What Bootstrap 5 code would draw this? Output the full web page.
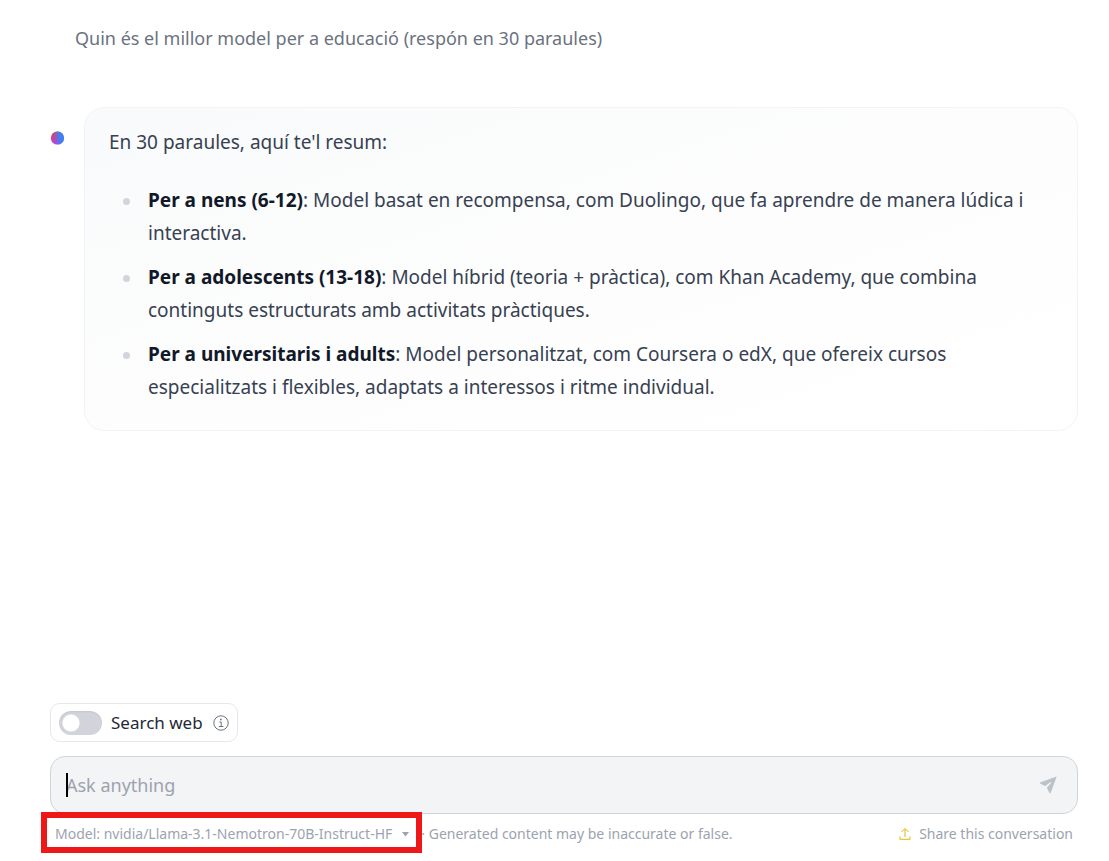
<!DOCTYPE html>
<html lang="ca">
<head>
<meta charset="utf-8">
<meta name="viewport" content="width=device-width, initial-scale=1">
<title>Chat</title>
<link rel="stylesheet" href="https://cdn.jsdelivr.net/npm/bootstrap@5.3.0/dist/css/bootstrap.min.css">
<style>
body { font-family: "Noto Sans", sans-serif; color: #374151; background: #fff; }
.chat { padding: 22px 31px 17px 50px; }
.question { font-size: 18px; line-height: 32px; color: #6b7280; padding-left: 25px; margin-bottom: 53px; }
.avatar { width: 14px; height: 14px; margin-top: 24px; }
.answer { font-size: 19px; line-height: 33px; margin-left: 20px; padding: 18px 24px 26px; border: 1px solid #f3f4f6; border-radius: 20px; background: linear-gradient(to bottom right, #f9fafb, #fefefe 70%, #fff); }
.answer p { margin-bottom: 25px; }
.answer ul { list-style: none; padding-left: 39px; gap: 11px; }
.answer li { position: relative; }
.answer li::before { content: ""; position: absolute; left: -25px; top: 14px; width: 7px; height: 7px; border-radius: 50%; background: #d1d5db; }
.answer strong { color: #111827; }
.search-toggle { height: 39px; padding: 0 8px; border: 1px solid #e5e7eb; border-radius: 10px; color: #1f2937; font-size: 17px; margin-bottom: 14px; }
.search-toggle .form-check-input { width: 43px; height: 24px; margin: 0 9px 0 0; border: 0; background-color: #d1d5db; background-size: 26px; background-image: radial-gradient(circle, #fff 8px, transparent 9px); background-position: -1px center; box-shadow: inset 0 1px 2px #0001; }
.info-btn { margin-left: 10px; color: #6b7280; }
.prompt { height: 58px; border: 1px solid #d1d5db; border-radius: 15px; background: #f3f4f6; padding-left: 15px; padding-right: 18px; }
.prompt .form-control { font-size: 18px; line-height: 28px; color: #374151; padding: 0; }
.prompt .form-control::placeholder { color: #9ca3af; opacity: 1; }
.caret { position: absolute; left: 15px; top: 16px; width: 2px; height: 24px; background: #000; }
.notes { font-size: 14px; line-height: 20px; color: #9ca3af; padding: 10px 5px 0; }
.notes a { color: inherit; text-decoration: none; }
.model-link { gap: 10px; margin-right: 12px; }
.highlight { position: absolute; inset: -12px -13px -9px -14px; border: 6px solid #ee1818; pointer-events: none; }
</style>
</head>
<body>
<div class="chat container-fluid min-vh-100 d-flex flex-column">
  <main class="flex-grow-1">
    <p class="question">Quin és el millor model per a educació (respón en 30 paraules)</p>
    <div class="d-flex align-items-start">
      <svg class="avatar flex-shrink-0" viewBox="0 0 14 14" aria-hidden="true">
        <defs>
          <linearGradient id="orbLeft" x1="0.3" y1="0" x2="0.3" y2="1"><stop offset=".1" stop-color="#d5485f"/><stop offset=".5" stop-color="#c94398"/><stop offset="1" stop-color="#b244f5"/></linearGradient>
          <linearGradient id="orbRight" x1="0" y1="0.2" x2="1" y2="0"><stop offset=".2" stop-color="#3b82f6" stop-opacity="0"/><stop offset=".58" stop-color="#3b82f6"/></linearGradient>
        </defs>
        <circle cx="7.4" cy="7" r="6.6" fill="url(#orbLeft)"/><circle cx="7.4" cy="7" r="6.6" fill="url(#orbRight)"/>
      </svg>
      <article class="answer flex-grow-1">
        <p>En 30 paraules, aquí te'l resum:</p>
        <ul class="d-flex flex-column mb-0">
          <li><strong>Per a nens (6-12)</strong>: Model basat en recompensa, com Duolingo, que fa aprendre de manera lúdica i interactiva.</li>
          <li><strong>Per a adolescents (13-18)</strong>: Model híbrid (teoria + pràctica), com Khan Academy, que combina continguts estructurats amb activitats pràctiques.</li>
          <li><strong>Per a universitaris i adults</strong>: Model personalitzat, com Coursera o edX, que ofereix cursos especialitzats i flexibles, adaptats a interessos i ritme individual.</li>
        </ul>
      </article>
    </div>
  </main>
  <form>
    <div class="search-toggle d-inline-flex align-items-center">
      <div class="form-check form-switch d-flex align-items-center p-0 m-0">
        <input class="form-check-input" type="checkbox" role="switch" id="searchWeb">
        <label class="form-check-label" for="searchWeb">Search web</label>
      </div>
      <button type="button" class="info-btn btn p-0 border-0 d-flex" aria-label="About web search">
        <svg width="16" height="16" viewBox="0 0 16 16" fill="none" stroke="currentColor"><circle cx="8" cy="8" r="7.2"/><path d="M6.3 7h1.9v4.3M5.8 11.5h4.6"/><circle cx="7.9" cy="4.5" r=".9" fill="currentColor" stroke="none"/></svg>
      </button>
    </div>
    <div class="prompt d-flex align-items-center position-relative">
      <input class="form-control border-0 bg-transparent shadow-none" type="text" placeholder="Ask anything" aria-label="Ask anything">
      <span class="caret"></span>
      <button type="submit" class="btn p-0 border-0 d-flex" aria-label="Send">
        <svg width="22" height="22" viewBox="0 0 22 22" fill="#bcc2ca"><path d="M19.7 2.4 3 8.6v1l5.2 2.5 5.4-4.2.7.7-4.4 5.2 2.7 5.4h1z"/></svg>
      </button>
    </div>
  </form>
  <footer class="notes d-flex justify-content-between">
    <div class="d-flex">
      <a href="#" class="model-link position-relative d-flex align-items-center">Model: nvidia/Llama-3.1-Nemotron-70B-Instruct-HF
        <svg width="7" height="5" viewBox="0 0 7 5" fill="#9ca3af" aria-hidden="true"><path d="M0 0h7L3.5 4.5z"/></svg>
        <span class="highlight"></span>
      </a>
      <span>· Generated content may be inaccurate or false.</span>
    </div>
    <a href="#" class="d-flex align-items-center">
      <svg class="me-2" width="12" height="14" viewBox="0 0 12 14" fill="none" stroke="#eab308" aria-hidden="true"><path d="M6 10V2M2.5 5 6 1.5 9.5 5M1 9.5v2.8h10V9.5"/></svg>
      Share this conversation
    </a>
  </footer>
</div>
<script src="https://cdn.jsdelivr.net/npm/bootstrap@5.3.0/dist/js/bootstrap.bundle.min.js"></script>
</body>
</html>
